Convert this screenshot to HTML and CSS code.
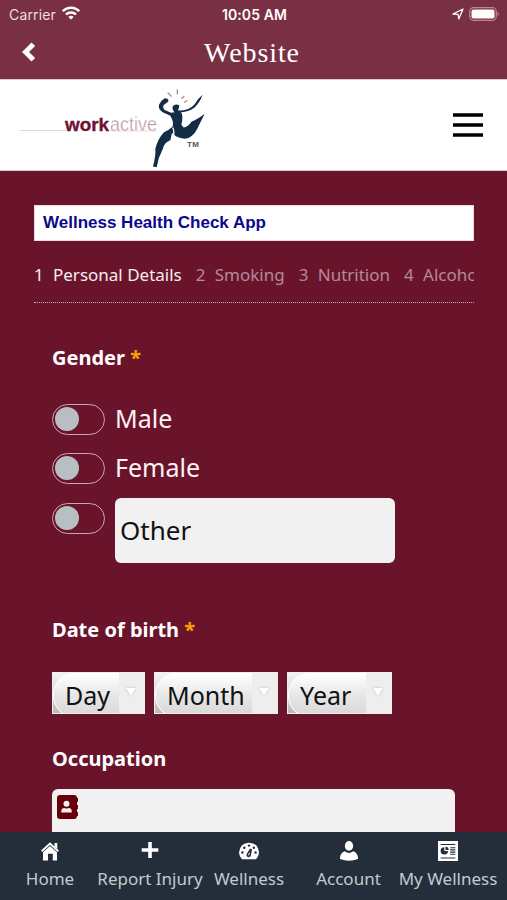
FILE: index.html
```html
<!DOCTYPE html>
<html lang="en">
<head>
<meta charset="utf-8">
<title>Website</title>
<link rel="stylesheet" href="styles.css">
</head>
<body>
<div class="screen">
  <header class="topbar">
    <div class="status">
      <div class="status-left"><span class="carrier">Carrier</span>
        <svg class="wifi" width="18" height="14" viewBox="0 0 18 14" fill="none" stroke="#fff" stroke-width="2.5"><path d="M.8 5.2C5.2.5 12.8.5 17.2 5.2M4 8.5C6.7 5.7 11.3 5.7 14 8.5"/><path d="M9 13.6L6.3 10.9Q9 8.7 11.7 10.9Z" fill="#fff" stroke="none"/></svg>
      </div>
      <span class="clock">10:05 AM</span>
      <div class="status-right">
        <svg width="12" height="12" viewBox="0 0 12 12"><path d="M1 6L11 1L6.8 11L6 6.3Z" fill="none" stroke="#fff" stroke-width="1.3" stroke-linejoin="round"/></svg>
        <svg width="31" height="14" viewBox="0 0 31 14"><rect x=".7" y=".7" width="26.6" height="12.6" rx="4" fill="none" stroke="#b98a96" stroke-width="1.2"/><rect x="2.5" y="2.5" width="23" height="9" rx="2" fill="#fff"/><path d="M28.5 4.8Q31 7 28.5 9.2Z" fill="#b98a96"/></svg>
      </div>
    </div>
    <div class="titlebar">
      <svg class="back" width="14" height="20" viewBox="0 0 14 20"><path d="M11.3 2.2L3.5 10L11.3 17.8" fill="none" stroke="#fff" stroke-width="5"/></svg>
      <h1>Website</h1>
    </div>
  </header>
  <div class="brand">
    <svg width="190" height="90" viewBox="0 0 190 90">
      <path d="M0 50.5H46" stroke="#ded6d9"/>
      <path d="M90 51H137" stroke="#ead9df"/>
      <text class="logo-bold" x="45" y="51" textLength="44" lengthAdjust="spacingAndGlyphs">work</text>
      <text class="logo-light" x="90" y="51" textLength="47" lengthAdjust="spacingAndGlyphs">active</text>
      <g transform="translate(-20 -1.5) scale(.33333)">
        <path fill="#142d46" d="M477 79Q481 67 494 59Q507 59 505 69L493 78Q486 84 493 94L513 103L524 101Q516 95 518 84Q525 74 538 80Q537 90 534 96Q567 97 584 77Q595 59 608 49Q599 73 583 88Q562 102 543 101Q551 110 544 139L551 147Q564 146 575 129Q593 123 614 106Q600 134 592 151Q577 180 554 181Q527 178 516 163L511 185Q492 192 489 210Q474 238 470 266L459 264Q468 229 466 211Q473 181 492 161Q508 154 518 144Q522 131 511 112L488 101Q474 93 477 79Z"/>
        <path d="M520 176Q524 158 518 147" fill="none" stroke="#fff" stroke-width="4"/>
        <path d="M503 43L515 54M532 32V48M553 53L544 61M562 66L552 72" stroke="#bd8492" stroke-width="4"/>
      </g>
      <text class="trademark" x="167" y="67" textLength="12">TM</text>
    </svg>
    <svg class="menu" width="30" height="26" viewBox="0 0 30 26"><path d="M0 3H30M0 13H30M0 23H30" stroke="#000" stroke-width="3.6"/></svg>
  </div>
  <main>
    <div class="app-name">Wellness Health Check App</div>
    <nav class="steps">
      <span class="step active"><b>1</b>Personal Details</span>
      <span class="step"><b>2</b>Smoking</span>
      <span class="step"><b>3</b>Nutrition</span>
      <span class="step"><b>4</b>Alcohol</span>
    </nav>
    <form class="form">
      <h2>Gender <i>*</i></h2>
      <div class="options">
        <div class="option"><span class="toggle"></span><span class="option-label">Male</span></div>
        <div class="option"><span class="toggle"></span><span class="option-label">Female</span></div>
        <div class="option"><span class="toggle"></span><div class="other">Other</div></div>
      </div>
      <h2 class="birth">Date of birth <i>*</i></h2>
      <div class="selects">
        <div class="select day"><div class="pill"><span>Day</span></div><div class="arrow"></div></div>
        <div class="select month"><div class="pill"><span>Month</span></div><div class="arrow"></div></div>
        <div class="select year"><div class="pill"><span>Year</span></div><div class="arrow"></div></div>
      </div>
      <h2 class="job">Occupation</h2>
      <div class="job-field">
        <svg width="22" height="24" viewBox="0 0 22 24"><rect width="20" height="24" rx="3" fill="#680009"/><path d="M19 3h2v4h-2zM19 10h2v4h-2zM19 17h2v4h-2z" fill="#680009"/><circle cx="9.5" cy="8.7" r="3" fill="#f1f1f1"/><path d="M4.3 17.5V16Q4.3 13 7.5 13Q9.5 14 11.5 13Q14.7 13 14.7 16V17.5Z" fill="#f1f1f1"/></svg>
      </div>
    </form>
  </main>
  <footer class="tabs">
    <div class="tab"><svg width="20" height="20" viewBox="0 0 20 20" fill="#fff"><path d="M1.7 10.2L10 2.5L18.3 10.2" fill="none" stroke="#fff" stroke-width="2"/><path d="M14.5 2H17.3V8L14.5 5.5ZM3 11.3L10 4.9L17 11.3V19.5H12.8V12.8H8V19.5H3Z"/></svg><span>Home</span></div>
    <div class="tab"><svg width="20" height="20" viewBox="0 0 20 20"><path d="M1.7 9H18.3M10 1V17" stroke="#fff" stroke-width="3.6"/></svg><span>Report Injury</span></div>
    <div class="tab"><svg width="20" height="20" viewBox="0 0 20 20"><path d="M3 18.2Q0 15 0 11.5Q1 2 10 1.7Q19 2 20 11.5Q20 15 17 18.2Z" fill="#fff"/><g fill="#242e3a"><circle cx="3.4" cy="11.5" r="1.2"/><circle cx="5.3" cy="6.8" r="1.2"/><circle cx="10" cy="4.6" r="1.2"/><circle cx="14.8" cy="6.8" r="1.2"/><circle cx="16.6" cy="11.5" r="1.2"/><path d="M11 7.5L13 8.2L12 14Q11.7 16.3 9.5 16.2Q6.8 15.5 7.7 13Z"/></g><path d="M9.5 14.3L10.5 11.7" stroke="#fff"/></svg><span>Wellness</span></div>
    <div class="tab"><svg width="20" height="20" viewBox="0 0 20 20" fill="#fff"><ellipse cx="10" cy="4.9" rx="4.1" ry="4.9"/><path d="M1 18Q.8 12 5.8 10.3Q10 13.5 14.2 10.3Q19.2 12 19 18Q10 21.5 1 18Z"/></svg><span>Account</span></div>
    <div class="tab"><svg width="20" height="20" viewBox="0 0 20 20"><path d="M0 0H20V20H0Z" fill="#fff"/><path d="M2.7 3.5H17.3M2.7 17H17.3" stroke="#242e3a" stroke-width="1.2"/><path d="M12.2 6.7H17.3M12.2 8.9H17.3M12.2 11.1H17.3M12.2 13.3H17.3" stroke="#242e3a" stroke-width="1.1"/><path d="M6.3 6.2V10H10A3.7 3.7 0 1 1 6.3 6.2ZM7.5 5.7A3.3 3.3 0 0 1 10.7 9H7.5Z" fill="#242e3a"/></svg><span>My Wellness</span></div>
  </footer>
</div>
</body>
</html>
```
FILE: styles.css
```css
* { box-sizing: border-box; }
body { margin: 0; font-family: "Noto Sans", sans-serif; }
svg { display: block; flex: none; }
.screen { width: 507px; height: 900px; overflow: hidden; display: flex; flex-direction: column; background: #6a142b; }
.topbar { height: 79px; flex: none; background: #7a3044; color: #fff; }
.status { height: 28px; display: grid; grid-template-columns: 1fr auto 1fr; align-items: center; padding: 0 7px 0 9px; font-family: Inter, sans-serif; }
.status-left, .status-right { display: flex; align-items: center; }
.status-left { gap: 6px; }
.wifi { margin-top: -2px; }
.status-right { justify-content: flex-end; gap: 5px; margin-top: -1px; }
.carrier { font-size: 14px; letter-spacing: .15px; color: #ecdde1; }
.clock { font-size: 14px; font-weight: 600; letter-spacing: .1px; }
.titlebar { height: 50px; display: grid; grid-template-columns: 22px 1fr 22px; align-items: center; padding: 0 21px; }
h1 { margin: 0; text-align: center; font: 28px/36px "Liberation Serif", serif; letter-spacing: .9px; padding-right: 3px; }
.back { margin: -3px 0 0 1px; }
.brand { height: 92px; flex: none; display: flex; justify-content: space-between; align-items: center; padding: 0 24px 0 20px; background: #fff; border-top: 1px solid #dfc8cf; border-bottom: 1px solid #dfc8cf; }
.menu { margin-right: 0; }
.logo-bold { font: bold 19px "Liberation Sans", sans-serif; fill: #70132f; stroke: #70132f; stroke-width: .4px; }
.logo-light { font: 20px "Liberation Sans", sans-serif; fill: #bd94a1; stroke: #fff; stroke-width: .35px; }
.trademark { font: bold 8px "Liberation Sans", sans-serif; fill: #555; }
main { flex: 1; min-height: 0; overflow: hidden; padding: 34px 33px 0 34px; }
.app-name { height: 36px; background: #fff; border: 1px solid #ead9de; color: #0b088c; padding-left: 8px; font: bold 17px/34px "Liberation Sans", sans-serif; }
.steps { height: 62px; display: flex; gap: 14px; overflow: hidden; white-space: nowrap; border-bottom: 1px dotted #c6a6af; padding-top: 23px; font-size: 17px; line-height: 22px; color: #b5899a; }
.step { flex: none; display: flex; gap: 9px; }
.step b { font-weight: 400; width: 10px; }
.step.active { color: #f7edf0; }
.form { padding: 41px 18px 0; }
h2 { margin: 0; font-size: 20px; line-height: 28px; color: #fff; font-weight: 700; }
h2 i { font-style: normal; color: #f5a300; }
.options { margin-top: 30px; display: grid; grid-template-rows: 47px 49px 70px; }
.option { display: flex; gap: 10px; align-items: flex-start; }
.toggle { width: 53px; height: 31px; margin-top: 2px; border: 1px solid #c9a6b0; border-radius: 16px; padding: 2px; flex: none; }
.toggle::before { content: ""; display: block; width: 24px; height: 24px; border-radius: 50%; background: #b8bfc3; }
.option-label { color: #fff2f5; font-size: 25px; line-height: 34px; margin-top: -1px; }
.option:nth-child(2) { padding-top: 2px; }
.option:nth-child(3) { padding-top: 1px; }
.option:nth-child(3) .toggle { margin-top: 4px; }
.other { width: 280px; height: 65px; margin-top: -1px; border-radius: 6px; background: #f1f1f1; font-size: 26px; line-height: 65px; padding-left: 5px; color: #111; }
.birth { margin-top: 48px; }
.selects { margin-top: 28px; display: flex; gap: 9px; }
.select { height: 42px; display: grid; grid-template-columns: 1fr 25px; background: linear-gradient(#f4f4f4, #bfb8ba); border: 1px solid #eee; overflow: hidden; }
.day { width: 93px; }
.month { width: 124px; }
.year { width: 105px; }
.pill { border-radius: 21px 0 0 21px; background: linear-gradient(#fff, #e5e5e5 55%, #d8d8d8); border: 1px solid #fff; border-right: 0; font-size: 25px; line-height: 42px; padding-left: 11px; color: #111; white-space: nowrap; }
.arrow { background: #eee; display: flex; justify-content: center; padding-top: 15px; }
.arrow::before { content: ""; width: 0; height: 0; border: 5px solid transparent; border-top: 8px solid #fff; border-bottom: 0; margin-left: -2px; filter: drop-shadow(0 0 1px #bbb); }
.job { margin-top: 31px; }
.job-field { margin-top: 16px; width: 403px; height: 70px; padding: 6px 5px; border-radius: 6px; background: #f1f1f1; }
.tabs { height: 68px; flex: none; display: grid; grid-template-columns: 100px 100px 98px 101px 98px; padding-top: 9px; background: #242e3a; }
.tab { display: flex; flex-direction: column; align-items: center; gap: 6px; color: #c3c9d0; font-size: 17px; line-height: 24px; white-space: nowrap; }
```
